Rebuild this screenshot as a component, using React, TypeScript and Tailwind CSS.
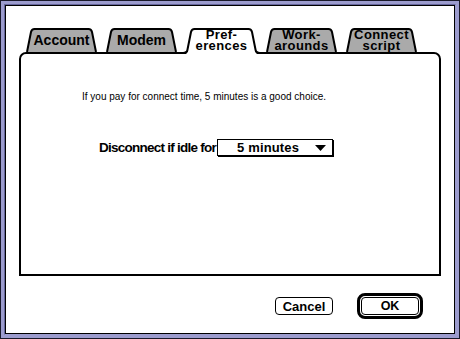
import React from "react";

type TabProps = { lines: string[]; selected?: boolean };

function Tab({ lines, selected }: TabProps) {
  const two = lines.length > 1;
  return (
    <div
      className={
        selected
          ? "relative z-10 grid w-[71px] h-[26px] -mb-[2px]"
          : "grid w-[71px] h-[24px]"
      }
    >
      {selected ? (
        <svg
          className="col-start-1 row-start-1 overflow-visible"
          width="71"
          height="26"
          viewBox="0 0 71 26"
        >
          <path
            d="M1 24 L5 4 Q5.6 1 8.6 1 L62.4 1 Q65.4 1 66 4 L70 24 L71 26 L0 26 Z"
            fill="#ffffff"
          />
          <path
            d="M-3 25 Q1 25 1.4 22 L5 4 Q5.6 1 8.6 1 L62.4 1 Q65.4 1 66 4 L69.6 22 Q70 25 74 25"
            fill="none"
            stroke="#000"
            strokeWidth="2"
          />
        </svg>
      ) : (
        <svg
          className="col-start-1 row-start-1"
          width="71"
          height="24"
          viewBox="0 0 71 24"
        >
          <path
            d="M1 24 L5 4 Q5.6 1 8.6 1 L62.4 1 Q65.4 1 66 4 L70 24 Z"
            fill="#aaaaaa"
          />
          <path
            d="M1 24 L5 4 Q5.6 1 8.6 1 L62.4 1 Q65.4 1 66 4 L70 24"
            fill="none"
            stroke="#000"
            strokeWidth="2"
          />
        </svg>
      )}
      <div
        className={
          "col-start-1 row-start-1 z-10 flex flex-col items-center text-black font-bold h-[24px] " +
          (two
            ? "justify-start pt-[1px] text-[13px] tracking-[0.4px] leading-[11px]"
            : "justify-center text-[14px] leading-[16px]")
        }
      >
        {lines.map((l) => (
          <span key={l} className={two ? "block h-[11px] leading-[11px]" : "block"}>
            {l}
          </span>
        ))}
      </div>
    </div>
  );
}

export default function App() {
  return (
    <div className="w-[460px] h-[339px] border border-[#1a1a2a] bg-[#9c9cce] p-[3px] font-['Liberation_Sans',Arial,sans-serif] text-black">
      <div className="h-full w-full border-l border-t border-[#66669c] border-r-[#9c9cce] border-b-[#9c9cce] border-r border-b">
        <div className="h-full w-full border border-black bg-white pt-[22px] pl-[13px]">
          <div className="flex flex-col w-[422px]">
            <div className="flex items-end gap-[9px] ml-[7px]">
              <Tab lines={["Account"]} />
              <Tab lines={["Modem"]} />
              <Tab lines={["Pref-", "erences"]} selected />
              <Tab lines={["Work-", "arounds"]} />
              <Tab lines={["Connect", "script"]} />
            </div>
            <div className="w-[422px] h-[224px] border-2 border-black rounded-t-[7px] bg-white flex flex-col">
              <p className="mt-[37px] pl-[61px] text-[10px] leading-[12px] font-normal">
                If you pay for connect time, 5 minutes is a good choice.
              </p>
              <div className="mt-[36px] pl-[78px] flex items-center">
                <span className="font-bold text-[13.5px] tracking-[-0.75px] leading-[16px] whitespace-nowrap">
                  Disconnect if idle for
                </span>
                <div className="ml-[1px] w-[116px] h-[17px] border border-black shadow-[1px_1px_0_#000] bg-white flex items-center justify-between pl-[19px] pr-[6px]">
                  <span className="font-bold text-[13px] leading-[15px] tracking-[0.15px] whitespace-nowrap">
                    5 minutes
                  </span>
                  <svg width="11" height="6" viewBox="0 0 11 6">
                    <polygon points="0,0 11,0 5.5,6" fill="#000" />
                  </svg>
                </div>
              </div>
            </div>
            <div className="flex justify-end items-center gap-[24px] pr-[18px] mt-[17px]">
              <button className="w-[58px] h-[18px] border border-black rounded-[4px] bg-white flex items-center justify-center font-bold text-[13px] leading-[15px]">
                Cancel
              </button>
              <div className="w-[66px] h-[26px] border-[3px] border-black rounded-[8px] p-[1px] bg-white">
                <button className="w-full h-full border border-black rounded-[4px] bg-white flex items-center justify-center font-bold text-[12.5px] leading-[15px]">
                  OK
                </button>
              </div>
            </div>
          </div>
        </div>
      </div>
    </div>
  );
}
